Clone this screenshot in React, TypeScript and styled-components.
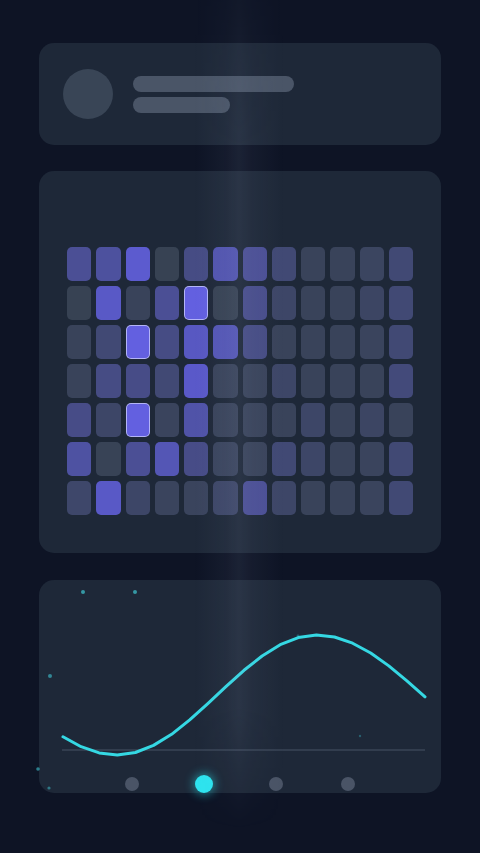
import React from "react";
import styled, { createGlobalStyle, css } from "styled-components";

const GlobalStyle = createGlobalStyle`
    html, body {
        margin: 0;
        padding: 0;
        background: #0e1425;
        font-family: "Inter", "Liberation Sans", sans-serif;
    }
`;

const Page = styled.div`
    position: relative;
    width: 480px;
    min-height: 853px;
    box-sizing: border-box;
    padding: 43px 39px 0;
    display: flex;
    flex-direction: column;
    gap: 26px;
    overflow: hidden;
`;

// soft light column that runs down the middle of the screen
const Beam = styled.div`
    position: absolute;
    top: 0;
    left: 194px;
    width: 90px;
    height: 830px;
    pointer-events: none;
    background: linear-gradient(
        90deg,
        rgba(160, 175, 210, 0) 0%,
        rgba(160, 175, 210, 0.05) 35%,
        rgba(170, 185, 220, 0.09) 50%,
        rgba(160, 175, 210, 0.05) 65%,
        rgba(160, 175, 210, 0) 100%
    );
    mask-image: linear-gradient(180deg, rgba(0, 0, 0, 0.35) 0%, #000 18%, #000 85%, transparent 100%);
`;

const Card = styled.div<{ $h: number }>`
    position: relative;
    height: ${(p) => p.$h}px;
    box-sizing: border-box;
    background: #1e2838;
    border-radius: 15px;
`;

const ProfileCard = styled(Card)`
    display: flex;
    align-items: center;
    gap: 20px;
    padding: 0 24px;
`;

const Avatar = styled.div`
    width: 50px;
    height: 50px;
    border-radius: 50%;
    background: #394556;
`;

const Lines = styled.div`
    display: flex;
    flex-direction: column;
    gap: 5px;
`;

const Line = styled.div<{ $w: number }>`
    width: ${(p) => p.$w}px;
    height: 16px;
    border-radius: 8px;
    background: #4a5567;
`;

const GridCard = styled(Card)`
    padding: 76px 28px 0;
`;

const Grid = styled.div`
    display: grid;
    grid-template-columns: repeat(12, 1fr);
    grid-auto-rows: 34px;
    gap: 5px;
`;

const GREY = [55, 66, 83];
const PURPLE = [94, 92, 214];

const mix = (t: number) =>
    `rgb(${GREY.map((g, i) => Math.round(g + (PURPLE[i] - g) * t)).join(",")})`;

const Cell = styled.div<{ $level: number }>`
    border-radius: 5px;
    box-sizing: border-box;
    background: ${(p) => (p.$level >= 5 ? "#6360e0" : mix(p.$level / 4))};
    ${(p) =>
        p.$level >= 5 &&
        css`
            border: 1px solid rgba(205, 208, 255, 0.75);
        `}
`;

const LEVELS = [
    [2, 2.3, 3.8, 0, 1.5, 2.8, 2, 1, 0.2, 0.2, 0.4, 1],
    [0, 3.5, 0.2, 2, 5, 0, 1.7, 0.6, 0.2, 0.2, 0.5, 1],
    [0.2, 1, 5, 1.5, 3.4, 3, 1.5, 0.2, 0.2, 0.2, 0.3, 1],
    [0.2, 1.5, 1.6, 1, 3.6, 0.2, 0.2, 0.6, 0.2, 0.2, 0.2, 1.2],
    [1.6, 0.6, 5, 0.3, 2.6, 0.2, 0.2, 0.2, 0.6, 0.2, 0.5, 0.2],
    [2.4, 0.1, 2, 3, 1.6, 0.3, 0.2, 1, 0.6, 0.2, 0.3, 1],
    [0.7, 3.5, 0.6, 0.3, 0.3, 0.6, 2, 0.6, 0.2, 0.2, 0.3, 1],
];

const ChartCard = styled(Card)`
    display: flex;
    flex-direction: column;
    margin-top: 1px;
`;

const ChartSvg = styled.svg`
    display: block;
    overflow: visible;
`;

const Dots = styled.div`
    display: flex;
    justify-content: center;
    height: 18px;
`;

const DotSlot = styled.div`
    width: 72px;
    display: flex;
    align-items: center;
    justify-content: center;
`;

const Dot = styled.div<{ $active?: boolean }>`
    width: ${(p) => (p.$active ? 18 : 14)}px;
    height: ${(p) => (p.$active ? 18 : 14)}px;
    border-radius: 50%;
    background: ${(p) => (p.$active ? "#2ee3ee" : "#4a5466")};
    box-shadow: ${(p) => (p.$active ? "0 0 10px 2px rgba(46, 227, 238, 0.45)" : "none")};
`;

// wave in page coords: trough at x=117, crest at x=317
const waveY = (x: number) => {
    if (x < 117) return 695 + 60 * Math.cos((Math.PI * (117 - x)) / 212);
    if (x <= 317) return 695 + 60 * Math.cos((Math.PI * (x - 117)) / 200);
    return 695 - 60 * Math.cos((Math.PI * (x - 317)) / 212);
};

// shifted into card coordinates (card origin at 39,580)
const wave = () => {
    const pts: string[] = [];
    for (let i = 0; i <= 20; i++) {
        const x = 63 + ((425 - 63) * i) / 20;
        pts.push(`${(x - 39).toFixed(1)},${(waveY(x) - 580).toFixed(1)}`);
    }
    return pts.join(" ");
};

const SPECKS = [
    { x: 44, y: 12, r: 2, o: 0.7 },
    { x: 96, y: 12, r: 2, o: 0.7 },
    { x: 11, y: 96, r: 2, o: 0.6 },
    { x: -1, y: 189, r: 1.8, o: 0.6 },
    { x: 10, y: 208, r: 1.6, o: 0.5 },
    { x: 259, y: 56, r: 1.4, o: 0.35 },
    { x: 321, y: 156, r: 1.2, o: 0.35 },
];

const App: React.FC = () => {
    return (
        <>
            <GlobalStyle />
            <Page>
                <ProfileCard $h={102}>
                    <Avatar />
                    <Lines>
                        <Line $w={161} />
                        <Line $w={97} />
                    </Lines>
                </ProfileCard>

                <GridCard $h={382}>
                    <Grid>
                        {LEVELS.flatMap((row, r) =>
                            row.map((lv, c) => <Cell key={`${r}-${c}`} $level={lv} />)
                        )}
                    </Grid>
                </GridCard>

                <ChartCard $h={213}>
                    <ChartSvg width={402} height={195} viewBox="0 0 402 195">
                        <line x1={23} y1={170} x2={386} y2={170} stroke="#3a4556" strokeWidth={1.5} />
                        {SPECKS.map((s, i) => (
                            <circle key={i} cx={s.x} cy={s.y} r={s.r} fill="#3fc7d3" opacity={s.o} />
                        ))}
                        <polyline
                            points={wave()}
                            fill="none"
                            stroke="#35d8e3"
                            strokeWidth={3}
                            strokeLinejoin="round"
                            strokeLinecap="round"
                        />
                    </ChartSvg>
                    <Dots>
                        <DotSlot>
                            <Dot />
                        </DotSlot>
                        <DotSlot>
                            <Dot $active />
                        </DotSlot>
                        <DotSlot>
                            <Dot />
                        </DotSlot>
                        <DotSlot>
                            <Dot />
                        </DotSlot>
                    </Dots>
                </ChartCard>
                <Beam />
            </Page>
        </>
    );
};

export default App;
